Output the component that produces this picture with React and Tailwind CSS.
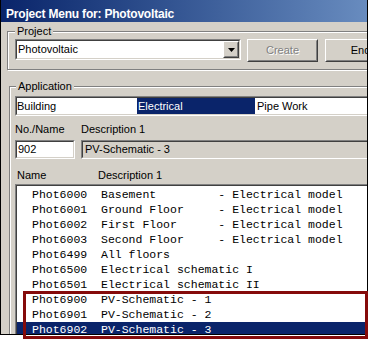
import React from 'react';

const rows = [
  ['Phot6000', 'Basement         - Electrical model'],
  ['Phot6001', 'Ground Floor     - Electrical model'],
  ['Phot6002', 'First Floor      - Electrical model'],
  ['Phot6003', 'Second Floor     - Electrical model'],
  ['Phot6499', 'All floors'],
  ['Phot6500', 'Electrical schematic I'],
  ['Phot6501', 'Electrical schematic II'],
  ['Phot6900', 'PV-Schematic - 1'],
  ['Phot6901', 'PV-Schematic - 2'],
  ['Phot6902', 'PV-Schematic - 3'],
];

// classic 2px sunken edge (text fields, list boxes)
function Sunken({ className = '', innerClass = '', children }) {
  return (
    <div className={`border border-t-[#808080] border-l-[#808080] border-b-white border-r-white ${className}`}>
      <div className={`h-full border border-t-[#404040] border-l-[#404040] border-b-[#d4d0c8] border-r-[#d4d0c8] ${innerClass}`}>
        {children}
      </div>
    </div>
  );
}

// classic raised edge (push buttons)
function Raised({ className = '', children }) {
  return (
    <div className={`border border-t-white border-l-white border-b-[#404040] border-r-[#404040] bg-[#d4d0c8] ${className}`}>
      <div className="h-full border border-t-[#d4d0c8] border-l-[#d4d0c8] border-b-[#808080] border-r-[#808080] flex items-center justify-center">
        {children}
      </div>
    </div>
  );
}

function GroupBox({ label, labelLeft, className = '', children }) {
  return (
    <div className={`relative border border-[#808080] shadow-[inset_1px_1px_0_#fff,1px_1px_0_#fff] ${className}`}>
      <span className="absolute -top-[8px] bg-[#d4d0c8] px-[2px] leading-[14px]" style={{ left: labelLeft }}>
        {label}
      </span>
      {children}
    </div>
  );
}

export default function App() {
  return (
    <div className="w-[377px] h-[347px] bg-white relative overflow-hidden font-['Liberation_Sans',Arial,sans-serif] text-[11px] text-black">
      <div className="w-[368px] h-[335px] border-x border-b border-black overflow-hidden bg-[#d4d0c8]">
        <div className="w-[573px]">
          {/* ── Title bar ── */}
          <div className="h-[22px] pl-[5px] pt-[7px] bg-gradient-to-r from-[#0a246a] to-[#a6caf0]">
            <div className="text-white font-bold text-[12px] leading-[14px] tracking-[-0.2px]">
              Project Menu for: Photovoltaic
            </div>
          </div>

          {/* ── Project ── */}
          <GroupBox label="Project" labelLeft={7} className="ml-[6px] mt-[9px] h-[39px] w-[560px]">
            <div className="flex items-start pl-[7px] pt-[7px]">
              <Sunken className="w-[226px] h-[21px] bg-white" innerClass="flex items-stretch">
                <div className="flex-1 pl-[1px] leading-[17px]">Photovoltaic</div>
                <Raised className="w-[16px]">
                  <svg width="7" height="4" viewBox="0 0 7 4">
                    <path d="M0 0h7L3.5 4z" fill="#000" />
                  </svg>
                </Raised>
              </Sunken>
              <Raised className="ml-[6px] w-[71px] h-[23px]">
                <span className="text-[#808080] [text-shadow:1px_1px_0_#fff]">Create</span>
              </Raised>
              <Raised className="ml-[7px] w-[71px] h-[23px]">
                <span>End</span>
              </Raised>
            </div>
          </GroupBox>

          {/* ── Application ── */}
          <GroupBox label="Application" labelLeft={6} className="ml-[8px] mt-[16px] h-[280px] w-[560px]">
            <div className="pl-[5px] pt-[9px]">
              <Sunken className="h-[20px] bg-white" innerClass="flex leading-[16px]">
                <div className="w-[120px]">Building</div>
                <div className="w-[120px]">
                  <div className="w-[118px] bg-[#0a246a] text-white pl-[1px]">Electrical</div>
                </div>
                <div className="w-[120px]">Pipe Work</div>
              </Sunken>

              <div className="flex mt-[7px] leading-[13px]">
                <span className="w-[66px]">No./Name</span>
                <span>Description 1</span>
              </div>

              <div className="flex mt-[4px]">
                <Sunken className="w-[60px] h-[19px] bg-white" innerClass="pl-[1px] leading-[15px]">
                  902
                </Sunken>
                <Sunken className="ml-[6px] flex-1 h-[19px]" innerClass="pl-[2px] leading-[15px]">
                  PV-Schematic - 3
                </Sunken>
              </div>

              <div className="flex mt-[10px] pl-[2px] leading-[13px]">
                <span className="w-[81px]">Name</span>
                <span>Description 1</span>
              </div>

              <Sunken className="mt-[2px] h-[200px] bg-white" innerClass="pt-[1px]">
                {rows.map(([name, desc], i) => (
                  <div
                    key={name}
                    className={`h-[15px] pl-[15px] leading-[15px] whitespace-pre font-['Liberation_Mono','Courier_New',monospace] text-[11.5px] ${
                      i === rows.length - 1 ? 'bg-[#0a246a] text-white' : ''
                    }`}
                  >
                    {name + '  ' + desc}
                  </div>
                ))}
              </Sunken>
            </div>
          </GroupBox>
        </div>
      </div>

      {/* annotation frame around the PV rows */}
      <div className="absolute left-[23px] top-[291px] w-[345px] h-[48px] border-[3px] border-[#850b0b]" />
    </div>
  );
}
